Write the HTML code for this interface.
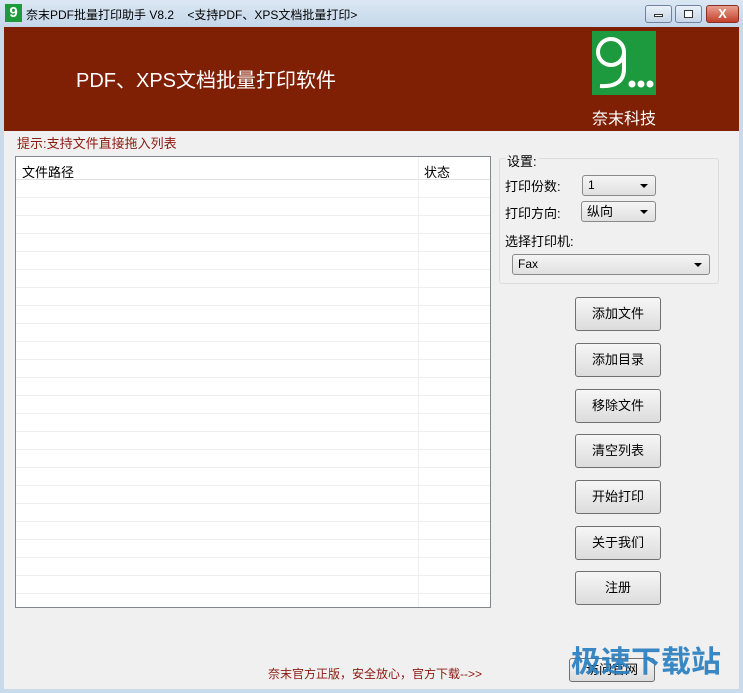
<!DOCTYPE html>
<html><head><meta charset="utf-8"><style>
*{margin:0;padding:0;box-sizing:border-box}
body{width:743px;height:693px;overflow:hidden;background:#c9dbea;font-family:"Liberation Sans","Noto Sans CJK SC",sans-serif;font-size:12px;position:relative}
.abs{position:absolute}
.title{left:0;top:0;width:743px;height:27px;background:linear-gradient(#dbe7f3,#c4d7ea)}
.client{left:4px;top:27px;width:735px;height:662px;background:#f0f0f0}
.banner{left:4px;top:27px;width:735px;height:104px;background:#7f1f04}
.btn{position:absolute;left:575px;width:86px;height:34px;border:1px solid #707070;border-radius:3px;background:linear-gradient(#f6f6f6,#dcdcdc);text-align:center;line-height:32px;font-size:13px;color:#000}
.combo{position:absolute;height:21px;border:1px solid #8a8a8a;border-radius:3px;background:linear-gradient(#f5f5f5,#e0e0e0);font-size:12px;line-height:19px;padding-left:5px}
.combo:after{content:"";position:absolute;right:7px;top:8px;border:4px solid transparent;border-top:4px solid #000;border-bottom:0}
.wb{position:absolute;top:5px;height:18px;border:1px solid #6f83a0;border-radius:3px;background:linear-gradient(#eaf1f8,#c8d6e6)}
</style></head><body>
<div class="abs title"></div>
<div class="abs" style="left:5px;top:4px;width:17px;height:18px;background:#1d9a3c;color:#fff;font-size:15px;line-height:18px;text-align:center;font-weight:bold">9</div>
<div class="abs" style="left:26px;top:6px;font-size:12px;color:#000">奈末PDF批量打印助手 V8.2 &nbsp;&nbsp;&nbsp;&lt;支持PDF、XPS文档批量打印&gt;</div>
<div class="wb" style="left:645px;width:27px"><div style="position:absolute;left:8px;top:8px;width:9px;height:3px;border:1px solid #333;background:#fff"></div></div>
<div class="wb" style="left:675px;width:27px"><div style="position:absolute;left:8px;top:4px;width:9px;height:8px;border:1px solid #333;background:#fff"></div></div>
<div class="wb" style="left:706px;width:33px;background:linear-gradient(#e8a090,#c4402a);border-color:#8a3020;color:#fff;text-align:center;font-weight:bold;font-size:13px;line-height:16px">X</div>
<div class="abs client"></div>
<div class="abs banner"></div>
<div class="abs" style="left:76px;top:64px;color:#fff;font-size:20px">PDF、XPS文档批量打印软件</div>
<div class="abs" style="left:592px;top:31px;width:64px;height:64px;background:#1e9a3e;overflow:hidden">
<svg width="64" height="64" style="position:absolute;left:0;top:0"><circle cx="19" cy="21" r="13" fill="none" stroke="#fff" stroke-width="4"/><path d="M32 21 L32 38 C32 50 24 56 8 55" fill="none" stroke="#fff" stroke-width="4"/><circle cx="40" cy="53" r="3.5" fill="#fff"/><circle cx="49" cy="53" r="3.5" fill="#fff"/><circle cx="58" cy="53" r="3.5" fill="#fff"/></svg>
</div>
<div class="abs" style="left:592px;top:105px;color:#fff;font-size:16px">奈末科技</div>
<div class="abs" style="left:17px;top:133px;color:#8b1a10;font-size:13px">提示:支持文件直接拖入列表</div>
<div class="abs" style="left:15px;top:156px;width:476px;height:452px;border:1px solid #828790;background:#fff;background-image:repeating-linear-gradient(#fff 0 17px,#eeeeee 17px 18px);background-position:0 23px"></div>
<div class="abs" style="left:16px;top:157px;width:474px;height:23px;background:#fff;border-bottom:1px solid #e2e2e2"></div>
<div class="abs" style="left:418px;top:157px;width:1px;height:450px;background:#eee"></div>
<div class="abs" style="left:22px;top:162px;font-size:13px">文件路径</div>
<div class="abs" style="left:424px;top:162px;font-size:13px">状态</div>
<div class="abs" style="left:499px;top:158px;width:220px;height:126px;border:1px solid #dcdcdc;border-radius:3px"></div>
<div class="abs" style="left:505px;top:151px;background:#f0f0f0;padding:0 2px;font-size:13px">设置:</div>
<div class="abs" style="left:505px;top:176px;font-size:13px">打印份数:</div>
<div class="combo" style="left:582px;top:175px;width:74px">1</div>
<div class="abs" style="left:505px;top:203px;font-size:13px">打印方向:</div>
<div class="combo" style="left:581px;top:201px;width:75px;font-size:13px">纵向</div>
<div class="abs" style="left:505px;top:231px;font-size:13px">选择打印机:</div>
<div class="combo" style="left:512px;top:254px;width:198px">Fax</div>
<div class="btn" style="top:297px">添加文件</div>
<div class="btn" style="top:343px">添加目录</div>
<div class="btn" style="top:389px">移除文件</div>
<div class="btn" style="top:434px">清空列表</div>
<div class="btn" style="top:480px">开始打印</div>
<div class="btn" style="top:526px">关于我们</div>
<div class="btn" style="top:571px">注册</div>
<div class="abs" style="left:268px;top:665px;color:#8b1a10;font-size:12px">奈末官方正版，安全放心，官方下载--&gt;&gt;</div>
<div class="btn" style="left:569px;top:658px;width:86px;height:24px;line-height:22px">访问官网</div>
<div class="abs" style="left:571px;top:637px;color:#2a7fc0;font-size:30px;font-weight:bold;opacity:.92">极速下载站</div>
</body></html>
